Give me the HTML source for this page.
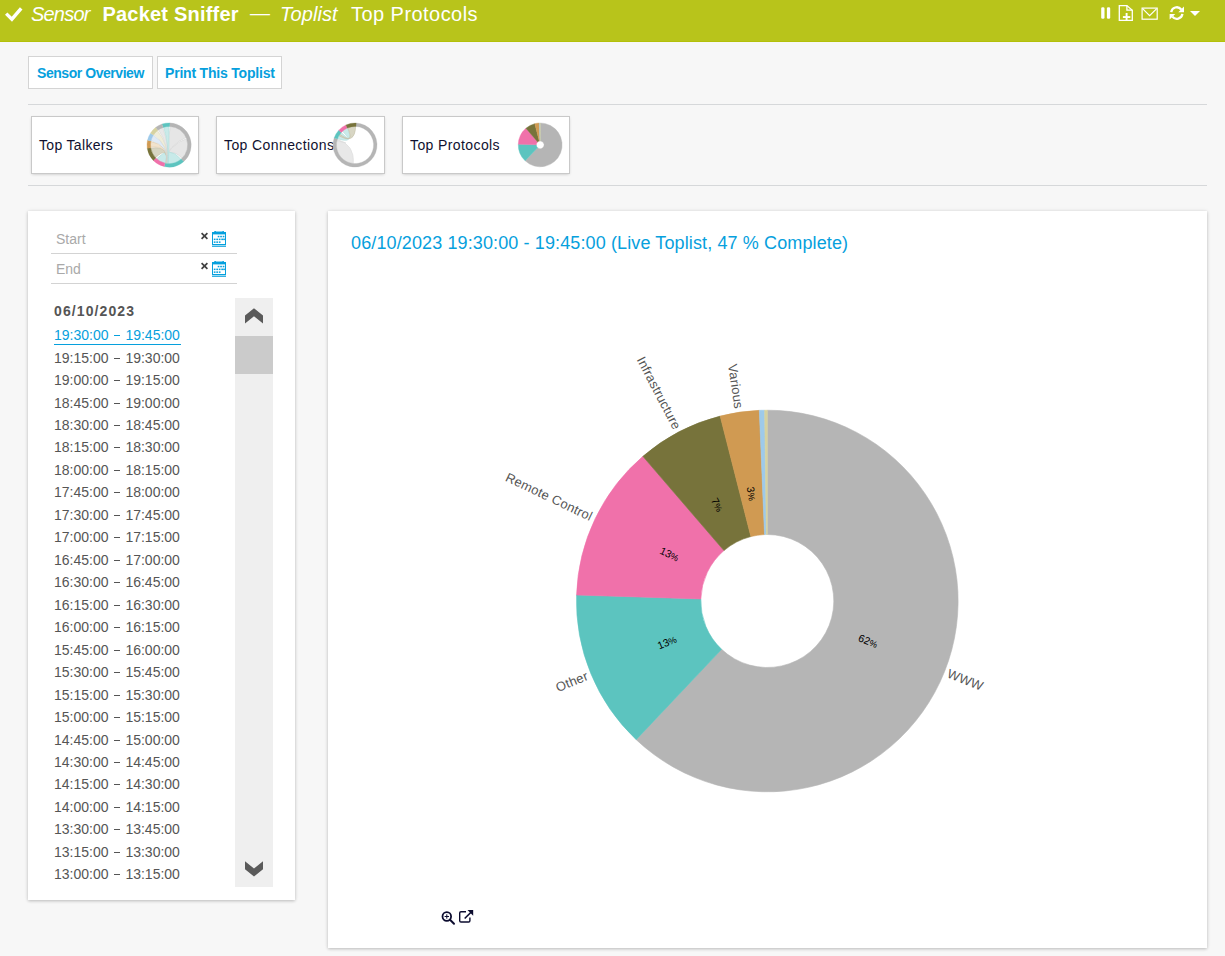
<!DOCTYPE html>
<html><head><meta charset="utf-8">
<style>
html,body{margin:0;padding:0;}
body{width:1225px;height:956px;background:#f7f7f7;position:relative;overflow:hidden;font-family:"Liberation Sans",sans-serif;}
.abs{position:absolute;white-space:nowrap;}
#hdr{position:absolute;left:0;top:0;width:1225px;height:42px;background:#b8c41b;box-shadow:inset 0 -1px 0 #b3c00a;}
#hdr .t{position:absolute;top:0px;color:#fff;font-size:20px;line-height:28px;}
.btn{position:absolute;top:56px;height:31px;background:#fff;border:1px solid #d4d4d4;box-sizing:content-box;}
.btn span{position:absolute;top:0;left:0;font-weight:bold;font-size:14px;color:#06a0dd;line-height:32px;letter-spacing:-0.45px;}
.hr{position:absolute;left:28px;width:1179px;height:1px;background:#d6d8da;}
.thumb{position:absolute;top:117px;height:56px;background:#fff;box-shadow:0 0 0 1px #c9c9c9, 0 1px 3px rgba(0,0,0,.25);}
.thumb span{position:absolute;left:7px;top:0;line-height:57px;font-size:14px;color:#10112f;letter-spacing:0.2px;}
.panel{position:absolute;background:#fff;box-shadow:0 1px 3px rgba(0,0,0,.22),0 0 5px rgba(0,0,0,.06);}
.inp{position:absolute;left:51px;width:186px;height:1px;background:#d3d3d3;}
.ph{position:absolute;left:56px;font-size:14px;color:#a9a9a9;line-height:16px;}
.li{position:absolute;left:54px;font-size:14px;color:#555;line-height:16px;}
.dash{display:inline-block;width:6.3px;height:1px;background:currentColor;margin:0 5px 0 5.6px;vertical-align:4px;}
.lbl{font-family:"Liberation Sans",sans-serif;font-size:13px;fill:#555;letter-spacing:0.25px;}
.pct{font-family:"Liberation Sans",sans-serif;font-size:10.5px;fill:#000;}
</style></head><body>
<div id="hdr">
  <svg class="abs" style="left:0;top:0" width="40" height="42"><path d="M6.2,13.6 L11.9,19.2 L21.2,8.4" stroke="#fff" stroke-width="3.4" fill="none"/></svg>
  <div class="t" style="left:31px;font-style:italic;letter-spacing:-0.8px;">Sensor</div>
  <div class="t" style="left:102.5px;font-weight:bold;letter-spacing:0.2px;">Packet Sniffer</div>
  <div class="t" style="left:250px;top:-1px;">—</div>
  <div class="t" style="left:280px;font-style:italic;letter-spacing:0.1px;">Toplist</div>
  <div class="t" style="left:351px;letter-spacing:0.45px;">Top Protocols</div>
  <svg class="abs" style="left:1090px;top:0" width="135" height="42">
<rect x="11.2" y="7.2" width="3.3" height="11.6" rx="1.3" fill="#fff"/>
<rect x="16.9" y="7.2" width="3.3" height="11.6" rx="1.3" fill="#fff"/>
<path d="M29.3,5.6 H36.9 L42.3,10.2 V20.4 H29.3 Z" fill="none" stroke="#fff" stroke-width="1.3"/>
<path d="M36.9,5.6 V10.2 H42.3" fill="none" stroke="#fff" stroke-width="1.3"/>
<rect x="32.9" y="16.1" width="7.4" height="1.9" fill="#fff"/>
<rect x="35.65" y="13" width="1.9" height="8" fill="#fff"/>
<rect x="52.1" y="8.1" width="15.1" height="11.1" fill="none" stroke="#fff" stroke-width="1.2"/>
<path d="M52.6,8.6 L59.6,15.6 L66.7,8.6" fill="none" stroke="#fff" stroke-width="1.2"/>
<path d="M81.2,12.2 A5.6,5.6 0 0 1 91.2,9.5" fill="none" stroke="#fff" stroke-width="2.3"/>
<path d="M94,6.6 V12.2 H88.3 Z" fill="#fff"/>
<path d="M92.4,13.9 A5.6,5.6 0 0 1 82.4,16.6" fill="none" stroke="#fff" stroke-width="2.3"/>
<path d="M79.6,19.6 V13.9 H85.3 Z" fill="#fff"/>
<path d="M100,11 H110 L105,16 Z" fill="#fff"/>
</svg>
</div>
<div class="btn" style="left:28px;width:123px;"><span style="left:8px">Sensor Overview</span></div>
<div class="btn" style="left:157px;width:123px;"><span style="left:7px;letter-spacing:-0.2px">Print This Toplist</span></div>
<div class="hr" style="top:104px"></div>
<div class="thumb" style="left:32px;width:166px;"><span style="letter-spacing:0.33px">Top Talkers</span></div>
<div class="thumb" style="left:217px;width:167px;"><span style="letter-spacing:0.4px">Top Connections</span></div>
<div class="thumb" style="left:403px;width:166px;"><span style="letter-spacing:0.4px">Top Protocols</span></div>
<svg class="abs" style="left:0;top:0" width="600" height="200">
<path d="M540.20,123.00A21.9,21.9 0 1 1 525.15,160.81L537.52,147.73A3.9,3.9 0 1 0 540.20,141.00Z" fill="#b5b5b5" stroke="#b5b5b5" stroke-width="0.4"/>
<path d="M525.15,160.81A21.9,21.9 0 0 1 518.31,144.21L536.30,144.78A3.9,3.9 0 0 0 537.52,147.73Z" fill="#5cc4bf" stroke="#5cc4bf" stroke-width="0.4"/>
<path d="M518.31,144.21A21.9,21.9 0 0 1 525.92,128.30L537.66,141.94A3.9,3.9 0 0 0 536.30,144.78Z" fill="#f071aa" stroke="#f071aa" stroke-width="0.4"/>
<path d="M525.92,128.30A21.9,21.9 0 0 1 534.79,123.68L539.24,141.12A3.9,3.9 0 0 0 537.66,141.94Z" fill="#77733b" stroke="#77733b" stroke-width="0.4"/>
<path d="M534.79,123.68A21.9,21.9 0 0 1 539.28,123.02L540.04,141.00A3.9,3.9 0 0 0 539.24,141.12Z" fill="#d09a52" stroke="#d09a52" stroke-width="0.4"/>
<path d="M539.28,123.02A21.9,21.9 0 0 1 539.89,123.00L540.15,141.00A3.9,3.9 0 0 0 540.04,141.00Z" fill="#9ecaea" stroke="#9ecaea" stroke-width="0.4"/>
<path d="M539.89,123.00A21.9,21.9 0 0 1 540.20,123.00L540.20,141.00A3.9,3.9 0 0 0 540.15,141.00Z" fill="#d6d2a0" stroke="#d6d2a0" stroke-width="0.4"/><g>
<path d="M170.40,126.45A18.6,18.6 0 0 1 186.09,137.43Q169.1,145.0 162.74,162.48A18.6,18.6 0 0 1 161.83,162.12Q169.1,145.0 170.40,126.45Z" fill="#e6e6e6" stroke="#cfcfcf" stroke-width="0.5"/>
<path d="M186.58,138.64A18.6,18.6 0 0 1 182.02,158.38Q169.1,145.0 163.97,162.88A18.6,18.6 0 0 1 163.04,162.59Q169.1,145.0 186.58,138.64Z" fill="#e6e6e6" stroke="#cfcfcf" stroke-width="0.5"/>
<path d="M181.06,159.25A18.6,18.6 0 0 1 166.51,163.42Q169.1,145.0 165.23,163.19A18.6,18.6 0 0 1 156.65,158.82Q169.1,145.0 181.06,159.25Z" fill="#c8eae9" stroke="#a9d9d6" stroke-width="0.5"/>
<path d="M155.50,157.69A18.6,18.6 0 0 1 150.78,148.23Q169.1,145.0 166.35,163.40A18.6,18.6 0 0 1 165.87,163.32Q169.1,145.0 155.50,157.69Z" fill="#d7d5c2" stroke="#b9b69a" stroke-width="0.5"/>
<path d="M150.64,147.27A18.6,18.6 0 0 1 150.84,141.45Q169.1,145.0 166.67,163.44A18.6,18.6 0 0 1 166.35,163.40Q169.1,145.0 150.64,147.27Z" fill="#f1e3cd" stroke="#d9c3a4" stroke-width="0.5"/>
<path d="M151.05,140.50A18.6,18.6 0 0 1 153.16,135.42Q169.1,145.0 166.99,163.48A18.6,18.6 0 0 1 166.67,163.44Q169.1,145.0 151.05,140.50Z" fill="#dfeaf6" stroke="#c5d5e3" stroke-width="0.5"/>
<path d="M153.68,134.60A18.6,18.6 0 0 1 157.39,130.55Q169.1,145.0 167.32,163.51A18.6,18.6 0 0 1 166.99,163.48Q169.1,145.0 153.68,134.60Z" fill="#efedda" stroke="#d9d5b8" stroke-width="0.5"/>
<path d="M158.43,129.76A18.6,18.6 0 0 1 162.74,127.52Q169.1,145.0 167.64,163.54A18.6,18.6 0 0 1 167.32,163.51Q169.1,145.0 158.43,129.76Z" fill="#e8e8e8" stroke="#d0d0d0" stroke-width="0.5"/>
<path d="M163.66,127.21A18.6,18.6 0 0 1 169.10,126.40Q169.1,145.0 168.45,163.59A18.6,18.6 0 0 1 167.64,163.54Q169.1,145.0 163.66,127.21Z" fill="#c9eae9" stroke="#a9d9d6" stroke-width="0.5"/>
<path d="M161.98,124.08A22.1,22.1 0 0 1 169.99,122.92L169.85,126.41A18.6,18.6 0 0 0 163.11,127.39Z" fill="#5cc4bf" stroke="#5cc4bf" stroke-width="0.3"/>
<path d="M169.99,122.92A22.1,22.1 0 0 1 183.60,161.68L181.30,159.04A18.6,18.6 0 0 0 169.85,126.41Z" fill="#b5b5b5" stroke="#b5b5b5" stroke-width="0.3"/>
<path d="M183.60,161.68A22.1,22.1 0 0 1 164.20,166.55L164.98,163.14A18.6,18.6 0 0 0 181.30,159.04Z" fill="#5cc4bf" stroke="#5cc4bf" stroke-width="0.3"/>
<path d="M164.20,166.55A22.1,22.1 0 0 1 153.31,160.46L155.81,158.01A18.6,18.6 0 0 0 164.98,163.14Z" fill="#f071aa" stroke="#f071aa" stroke-width="0.3"/>
<path d="M153.31,160.46A22.1,22.1 0 0 1 147.24,148.23L150.70,147.72A18.6,18.6 0 0 0 155.81,158.01Z" fill="#77733b" stroke="#77733b" stroke-width="0.3"/>
<path d="M147.24,148.23A22.1,22.1 0 0 1 147.54,140.14L150.96,140.91A18.6,18.6 0 0 0 150.70,147.72Z" fill="#d09a52" stroke="#d09a52" stroke-width="0.3"/>
<path d="M147.54,140.14A22.1,22.1 0 0 1 150.44,133.16L153.40,135.03A18.6,18.6 0 0 0 150.96,140.91Z" fill="#9ecaea" stroke="#9ecaea" stroke-width="0.3"/>
<path d="M150.44,133.16A22.1,22.1 0 0 1 155.80,127.35L157.91,130.15A18.6,18.6 0 0 0 153.40,135.03Z" fill="#d6d2a0" stroke="#d6d2a0" stroke-width="0.3"/>
<path d="M155.80,127.35A22.1,22.1 0 0 1 161.98,124.08L163.11,127.39A18.6,18.6 0 0 0 157.91,130.15Z" fill="#b5b5b5" stroke="#b5b5b5" stroke-width="0.3"/>
</g>
<path d="M353.38,163.53A18.6,18.6 0 0 1 336.88,140.82Q355.0,145.0 336.95,140.50A18.6,18.6 0 0 1 337.31,139.25Q355.0,145.0 353.38,163.53Z" fill="#e8e8e8" stroke="#d8d8d8" stroke-width="0.5"/>
<path d="M337.52,138.64A18.6,18.6 0 0 1 341.18,132.55Q355.0,145.0 342.55,131.18A18.6,18.6 0 0 1 347.43,128.01Q355.0,145.0 337.52,138.64Z" fill="#c9eae9" stroke="#a9d9d6" stroke-width="0.5"/>
<path d="M347.73,127.88A18.6,18.6 0 0 1 355.65,126.41Q355.0,145.0 338.89,135.70A18.6,18.6 0 0 1 339.76,134.33Q355.0,145.0 347.73,127.88Z" fill="#d8d6c4" stroke="#bcb99e" stroke-width="0.5"/>
<path d="M356.15,123.03A22.0,22.0 0 1 1 334.20,137.84L337.41,138.94A18.6,18.6 0 1 0 355.97,126.43Z" fill="#b5b5b5" stroke="#b5b5b5" stroke-width="0.3"/>
<path d="M334.20,137.84A22.0,22.0 0 0 1 338.75,130.17L341.26,132.46A18.6,18.6 0 0 0 337.41,138.94Z" fill="#5cc4bf" stroke="#5cc4bf" stroke-width="0.3"/>
<path d="M338.75,130.17A22.0,22.0 0 0 1 345.95,124.95L347.35,128.05A18.6,18.6 0 0 0 341.26,132.46Z" fill="#f071aa" stroke="#f071aa" stroke-width="0.3"/>
<path d="M345.95,124.95A22.0,22.0 0 0 1 356.15,123.03L355.97,126.43A18.6,18.6 0 0 0 347.35,128.05Z" fill="#77733b" stroke="#77733b" stroke-width="0.3"/>
</svg>
<div class="hr" style="top:185px"></div>
<div class="panel" style="left:28px;top:211px;width:267px;height:689px;"></div>
<div class="ph" style="top:231px">Start</div>
<div class="inp" style="top:253px"></div>
<div class="ph" style="top:261px">End</div>
<div class="inp" style="top:283px"></div>
<svg class="abs" style="left:198px;top:230px" width="32" height="20"><path d="M3.6,3.1 L9.4,8.9 M9.4,3.1 L3.6,8.9" stroke="#404040" stroke-width="1.7"/><rect x="14.5" y="2.5" width="13" height="12" fill="none" stroke="#06a0dd" stroke-width="1"/><rect x="14" y="2" width="14" height="2.4" fill="#06a0dd"/><rect x="16.3" y="1" width="1.6" height="1.2" fill="#06a0dd"/><rect x="24.3" y="1" width="1.6" height="1.2" fill="#06a0dd"/><rect x="17.9" y="1.2" width="6.4" height="1" fill="#06a0dd" opacity="0.6"/><rect x="19.7" y="5.8" width="1.7" height="1.5" fill="#06a0dd"/><rect x="22.2" y="5.8" width="1.7" height="1.5" fill="#06a0dd"/><rect x="24.7" y="5.8" width="1.7" height="1.5" fill="#06a0dd"/><rect x="15.8" y="8.6" width="1.7" height="1.5" fill="#06a0dd"/><rect x="18.3" y="8.6" width="1.7" height="1.5" fill="#06a0dd"/><rect x="20.8" y="8.6" width="1.7" height="1.5" fill="#06a0dd"/><rect x="23.3" y="8.6" width="1.7" height="1.5" fill="#06a0dd"/><rect x="25.2" y="8.6" width="1.7" height="1.5" fill="#06a0dd"/><rect x="15.8" y="11.4" width="1.7" height="1.5" fill="#06a0dd"/><rect x="18.3" y="11.4" width="1.7" height="1.5" fill="#06a0dd"/><rect x="20.8" y="11.4" width="1.7" height="1.5" fill="#06a0dd"/><rect x="14" y="15.6" width="14" height="1.2" fill="#06a0dd"/></svg><svg class="abs" style="left:198px;top:260px" width="32" height="20"><path d="M3.6,3.1 L9.4,8.9 M9.4,3.1 L3.6,8.9" stroke="#404040" stroke-width="1.7"/><rect x="14.5" y="2.5" width="13" height="12" fill="none" stroke="#06a0dd" stroke-width="1"/><rect x="14" y="2" width="14" height="2.4" fill="#06a0dd"/><rect x="16.3" y="1" width="1.6" height="1.2" fill="#06a0dd"/><rect x="24.3" y="1" width="1.6" height="1.2" fill="#06a0dd"/><rect x="17.9" y="1.2" width="6.4" height="1" fill="#06a0dd" opacity="0.6"/><rect x="19.7" y="5.8" width="1.7" height="1.5" fill="#06a0dd"/><rect x="22.2" y="5.8" width="1.7" height="1.5" fill="#06a0dd"/><rect x="24.7" y="5.8" width="1.7" height="1.5" fill="#06a0dd"/><rect x="15.8" y="8.6" width="1.7" height="1.5" fill="#06a0dd"/><rect x="18.3" y="8.6" width="1.7" height="1.5" fill="#06a0dd"/><rect x="20.8" y="8.6" width="1.7" height="1.5" fill="#06a0dd"/><rect x="23.3" y="8.6" width="1.7" height="1.5" fill="#06a0dd"/><rect x="25.2" y="8.6" width="1.7" height="1.5" fill="#06a0dd"/><rect x="15.8" y="11.4" width="1.7" height="1.5" fill="#06a0dd"/><rect x="18.3" y="11.4" width="1.7" height="1.5" fill="#06a0dd"/><rect x="20.8" y="11.4" width="1.7" height="1.5" fill="#06a0dd"/><rect x="14" y="15.6" width="14" height="1.2" fill="#06a0dd"/></svg>
<div class="abs" style="left:54px;top:302.5px;font-size:14px;font-weight:bold;color:#555;line-height:16px;letter-spacing:1.1px;">06/10/2023</div>
<div class="li" style="top:327.00px;color:#06a0dd;">19:30:00<i class="dash"></i>19:45:00</div><div class="abs" style="left:54px;top:344px;width:127px;height:1px;background:#06a0dd"></div>
<div class="li" style="top:350.00px">19:15:00<i class="dash"></i>19:30:00</div>
<div class="li" style="top:372.00px">19:00:00<i class="dash"></i>19:15:00</div>
<div class="li" style="top:395.00px">18:45:00<i class="dash"></i>19:00:00</div>
<div class="li" style="top:417.00px">18:30:00<i class="dash"></i>18:45:00</div>
<div class="li" style="top:439.00px">18:15:00<i class="dash"></i>18:30:00</div>
<div class="li" style="top:462.00px">18:00:00<i class="dash"></i>18:15:00</div>
<div class="li" style="top:484.00px">17:45:00<i class="dash"></i>18:00:00</div>
<div class="li" style="top:507.00px">17:30:00<i class="dash"></i>17:45:00</div>
<div class="li" style="top:529.00px">17:00:00<i class="dash"></i>17:15:00</div>
<div class="li" style="top:552.00px">16:45:00<i class="dash"></i>17:00:00</div>
<div class="li" style="top:574.00px">16:30:00<i class="dash"></i>16:45:00</div>
<div class="li" style="top:597.00px">16:15:00<i class="dash"></i>16:30:00</div>
<div class="li" style="top:619.00px">16:00:00<i class="dash"></i>16:15:00</div>
<div class="li" style="top:642.00px">15:45:00<i class="dash"></i>16:00:00</div>
<div class="li" style="top:664.00px">15:30:00<i class="dash"></i>15:45:00</div>
<div class="li" style="top:687.00px">15:15:00<i class="dash"></i>15:30:00</div>
<div class="li" style="top:709.00px">15:00:00<i class="dash"></i>15:15:00</div>
<div class="li" style="top:732.00px">14:45:00<i class="dash"></i>15:00:00</div>
<div class="li" style="top:754.00px">14:30:00<i class="dash"></i>14:45:00</div>
<div class="li" style="top:776.00px">14:15:00<i class="dash"></i>14:30:00</div>
<div class="li" style="top:799.00px">14:00:00<i class="dash"></i>14:15:00</div>
<div class="li" style="top:821.00px">13:30:00<i class="dash"></i>13:45:00</div>
<div class="li" style="top:844.00px">13:15:00<i class="dash"></i>13:30:00</div>
<div class="li" style="top:866.00px">13:00:00<i class="dash"></i>13:15:00</div>
<div class="abs" style="left:235px;top:298px;width:38px;height:589px;background:#efefef;"></div>
<div class="abs" style="left:235px;top:336px;width:38px;height:38px;background:#cbcbcb;"></div>
<svg class="abs" style="left:235px;top:298px" width="38" height="589">
<path d="M10,17.5 L19,10.3 L28,17.5 L28,25.5 L19,18.3 L10,25.5 Z" fill="#5a5a5a"/>
<path d="M10,563.2 L19,570.4 L28,563.2 L28,571.2 L19,578.4 L10,571.2 Z" fill="#5a5a5a"/>
</svg>
<div class="panel" style="left:328px;top:211px;width:879px;height:737px;"></div>
<div class="abs" style="left:351px;top:232px;font-size:18px;color:#06a0dd;line-height:22px;letter-spacing:0.12px;">06/10/2023 19:30:00 - 19:45:00 (Live Toplist, 47 % Complete)</div>
<svg class="abs" style="left:0;top:0" width="1225" height="956">
<path d="M767.30,410.20A190.8,190.8 0 1 1 636.20,739.63L721.61,649.32A66.5,66.5 0 1 0 767.30,534.50Z" fill="#b5b5b5" stroke="#b5b5b5" stroke-width="0.6" stroke-linejoin="round"/>
<path d="M636.20,739.63A190.8,190.8 0 0 1 576.59,595.01L700.83,598.91A66.5,66.5 0 0 0 721.61,649.32Z" fill="#5cc4bf" stroke="#5cc4bf" stroke-width="0.6" stroke-linejoin="round"/>
<path d="M576.59,595.01A190.8,190.8 0 0 1 642.88,456.35L723.94,550.58A66.5,66.5 0 0 0 700.83,598.91Z" fill="#f071aa" stroke="#f071aa" stroke-width="0.6" stroke-linejoin="round"/>
<path d="M642.88,456.35A190.8,190.8 0 0 1 720.17,416.11L750.87,536.56A66.5,66.5 0 0 0 723.94,550.58Z" fill="#77733b" stroke="#77733b" stroke-width="0.6" stroke-linejoin="round"/>
<path d="M720.17,416.11A190.8,190.8 0 0 1 759.31,410.37L764.52,534.56A66.5,66.5 0 0 0 750.87,536.56Z" fill="#d09a52" stroke="#d09a52" stroke-width="0.6" stroke-linejoin="round"/>
<path d="M759.31,410.37A190.8,190.8 0 0 1 764.64,410.22L766.37,534.51A66.5,66.5 0 0 0 764.52,534.56Z" fill="#9ecaea" stroke="#9ecaea" stroke-width="0.6" stroke-linejoin="round"/>
<path d="M764.64,410.22A190.8,190.8 0 0 1 767.30,410.20L767.30,534.50A66.5,66.5 0 0 0 766.37,534.51Z" fill="#d6d2a0" stroke="#d6d2a0" stroke-width="0.6" stroke-linejoin="round"/>
<text x="948.0" y="672.9" transform="rotate(21.70 948.0 672.9)" text-anchor="start" dy="0.35em" class="lbl">WWW</text>
<text x="868.1" y="641.1" transform="rotate(21.70 868.1 641.1)" text-anchor="middle" dy="0.35em" class="pct">62<tspan font-size="9">%</tspan></text>
<text x="587.5" y="675.1" transform="rotate(-22.40 587.5 675.1)" text-anchor="end" dy="0.35em" class="lbl">Other</text>
<text x="667.0" y="642.3" transform="rotate(-22.40 667.0 642.3)" text-anchor="middle" dy="0.35em" class="pct">13<tspan font-size="9">%</tspan></text>
<text x="591.8" y="517.1" transform="rotate(25.55 591.8 517.1)" text-anchor="end" dy="0.35em" class="lbl">Remote Control</text>
<text x="669.4" y="554.2" transform="rotate(25.55 669.4 554.2)" text-anchor="middle" dy="0.35em" class="pct">13<tspan font-size="9">%</tspan></text>
<text x="677.5" y="428.5" transform="rotate(62.50 677.5 428.5)" text-anchor="end" dy="0.35em" class="lbl">Infrastructure</text>
<text x="717.2" y="504.8" transform="rotate(62.50 717.2 504.8)" text-anchor="middle" dy="0.35em" class="pct">7<tspan font-size="9">%</tspan></text>
<text x="739.1" y="408.6" transform="rotate(81.65 739.1 408.6)" text-anchor="end" dy="0.35em" class="lbl">Various</text>
<text x="751.5" y="493.7" transform="rotate(81.65 751.5 493.7)" text-anchor="middle" dy="0.35em" class="pct">3<tspan font-size="9">%</tspan></text>
</svg>
<svg class="abs" style="left:435px;top:905px" width="45" height="25">
<circle cx="11.8" cy="11.5" r="4.3" fill="none" stroke="#0b0b2e" stroke-width="1.8"/>
<path d="M15,14.7 L19,18.7" stroke="#0b0b2e" stroke-width="2" stroke-linecap="round"/>
<path d="M9.6,11.5 H14 M11.8,9.3 V13.7" stroke="#0b0b2e" stroke-width="1"/>
<path d="M31,6.7 H26 Q24.7,6.7 24.7,8 V15.7 Q24.7,17 26,17 H33.6 Q34.9,17 34.9,15.7 V12.5" fill="none" stroke="#0b0b2e" stroke-width="1.4"/>
<path d="M29.7,13.5 L36,7.2" stroke="#0b0b2e" stroke-width="1.6"/>
<path d="M32.5,5 H38.2 V10.7 Z" fill="#0b0b2e"/>
</svg>
</body></html>
